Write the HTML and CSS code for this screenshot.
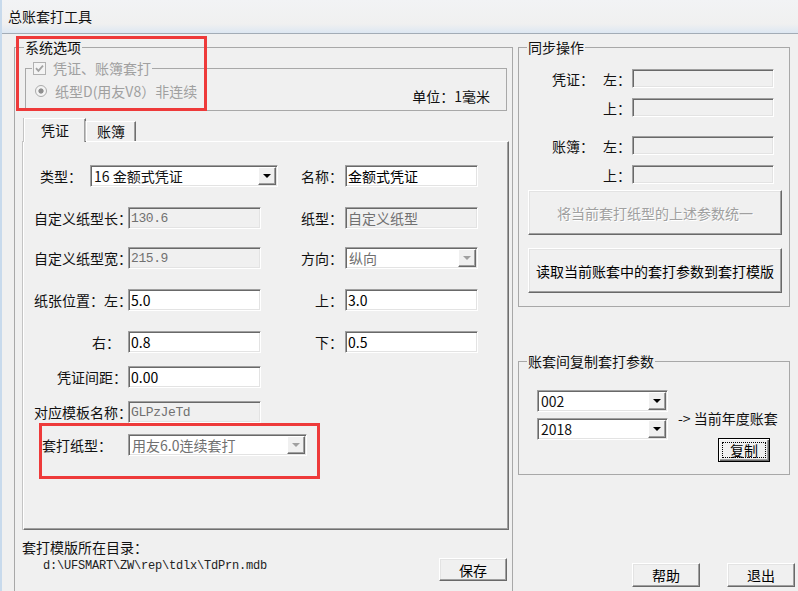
FILE: index.html
```html
<!DOCTYPE html>
<html lang="zh-CN">
<head>
    <meta charset="UTF-8">
    <title>总账套打工具</title>
    <link rel="stylesheet" href="styles.css">
</head>
<body>
    <div class="window">
        <div class="titlebar">总账套打工具</div>

        <div class="client">
            <fieldset class="group sys">
                <legend>系统选项</legend>

                <fieldset class="group opts">
                    <legend class="opts-legend">
                        <span class="check">
                            <svg width="13" height="13" viewBox="0 0 13 13"><rect x="0.5" y="0.5" width="12" height="12" fill="#f4f4f4" stroke="#b1b1b1"/><path d="M3 6.2 L5.4 8.8 L10 3.6" fill="none" stroke="#a2a2a2" stroke-width="1.8"/></svg>
                        </span>
                        <span class="muted">凭证、账簿套打</span>
                    </legend>
                    <div class="opts-body">
                        <div class="radio-line"><span class="radio"></span><span class="muted">纸型D(用友V8）非连续</span></div>
                        <div class="unit">单位：1毫米</div>
                    </div>
                </fieldset>

                <div class="tabs">
                    <div class="tab active">凭证</div>
                    <div class="tab">账簿</div>
                </div>
                <div class="tab-panel">
                    <div class="row">
                        <label class="lbl lbl-type">类型：</label>
                        <div class="combo combo-type"><span class="combo-text">16 金额式凭证</span><span class="combo-btn"><i class="arrow"></i></span></div>
                        <div class="half-r">
                            <label class="lbl-r">名称：</label>
                            <input class="field" value="金额式凭证">
                        </div>
                    </div>
                    <div class="row">
                        <label class="lbl">自定义纸型长：</label>
                        <input class="field mono" value="130.6" disabled>
                        <div class="half-r">
                            <label class="lbl-r">纸型：</label>
                            <input class="field" value="自定义纸型" disabled>
                        </div>
                    </div>
                    <div class="row gap-18">
                        <label class="lbl">自定义纸型宽：</label>
                        <input class="field mono" value="215.9" disabled>
                        <div class="half-r">
                            <label class="lbl-r">方向：</label>
                            <div class="combo combo-dir disabled"><span class="combo-text">纵向</span><span class="combo-btn"><i class="arrow"></i></span></div>
                        </div>
                    </div>
                    <div class="row">
                        <label class="lbl">纸张位置：左：</label>
                        <input class="field" value="5.0">
                        <div class="half-r">
                            <label class="lbl-r">上：</label>
                            <input class="field" value="3.0">
                        </div>
                    </div>
                    <div class="row">
                        <label class="lbl lbl-right">右：</label>
                        <input class="field" value="0.8">
                        <div class="half-r">
                            <label class="lbl-r">下：</label>
                            <input class="field" value="0.5">
                        </div>
                    </div>
                    <div class="row gap-13">
                        <label class="lbl lbl-gap">凭证间距：</label>
                        <input class="field" value="0.00">
                    </div>
                    <div class="row gap-13">
                        <label class="lbl">对应模板名称：</label>
                        <input class="field mono" value="GLPzJeTd" disabled>
                    </div>
                    <div class="row gap-11">
                        <label class="lbl lbl-paper">套打纸型：</label>
                        <div class="combo combo-paper disabled"><span class="combo-text">用友6.0连续套打</span><span class="combo-btn"><i class="arrow"></i></span></div>
                    </div>
                </div>

                <div class="dir">
                    <div class="dir-text">
                        <div>套打模版所在目录：</div>
                        <div class="dir-path path">d:\UFSMART\ZW\rep\tdlx\TdPrn.mdb</div>
                    </div>
                    <button class="btn btn-save">保存</button>
                </div>
            </fieldset>

            <div class="side">
                <fieldset class="group sync">
                    <legend>同步操作</legend>
                    <div class="sync-set">
                        <span class="set-name">凭证：</span><span>左：</span><input class="field sync-field" disabled>
                        <span></span><span>上：</span><input class="field sync-field" disabled>
                    </div>
                    <div class="sync-set sync-set-2">
                        <span class="set-name">账簿：</span><span>左：</span><input class="field sync-field" disabled>
                        <span></span><span>上：</span><input class="field sync-field" disabled>
                    </div>
                    <button class="btn wide-btn" disabled>将当前套打纸型的上述参数统一</button>
                    <button class="btn wide-btn wide-btn-2">读取当前账套中的套打参数到套打模版</button>
                </fieldset>

                <fieldset class="group copy">
                    <legend>账套间复制套打参数</legend>
                    <div class="copy-body">
                        <div class="copy-combos">
                            <div class="combo combo-copy"><span class="combo-text">002</span><span class="combo-btn"><i class="arrow"></i></span></div>
                            <div class="combo combo-copy"><span class="combo-text">2018</span><span class="combo-btn"><i class="arrow"></i></span></div>
                        </div>
                        <div class="copy-side">
                            <div class="copy-note">-&gt; 当前年度账套</div>
                            <button class="btn btn-default btn-copy">复制</button>
                        </div>
                    </div>
                </fieldset>

                <div class="foot">
                    <button class="btn btn-foot">帮助</button>
                    <button class="btn btn-foot">退出</button>
                </div>
            </div>
        </div>

        <div class="mark mark-sys"></div>
        <div class="mark mark-paper"></div>
    </div>
</body>
</html>
```

FILE: styles.css
```css
* {
    box-sizing: border-box;
}

body {
    margin: 0;
    background: #f0f0f0;
    font-family: "Noto Sans CJK SC", "Noto Sans", sans-serif;
    font-size: 14px;
    color: #111;
}

.window {
    position: relative;
    width: 798px;
    height: 591px;
    overflow: hidden;
    background: #f0f0f0;
    border-left: 2px solid #c8daec;
}

.titlebar {
    height: 34px;
    padding-left: 6px;
    line-height: 32px;
    background: linear-gradient(#f2f3f5 0, #f0f0f0 24px, #dde7f2 33px);
    border-bottom: 1px solid #a3acb6;
}

.client {
    display: flex;
    align-items: flex-start;
    padding-left: 12px;
}

/* group boxes */
.group {
    margin: 0;
    padding: 0;
    min-width: 0;
    border: 1px solid #a8a8a8;
}

.group > legend {
    padding: 0 1px;
    height: 16px;
    line-height: 16px;
    margin-left: 8px;
}

.sys {
    margin-top: 5px;
    width: 499px;
    height: 560px;
}

.sys > legend {
    margin-left: 9px;
}

.opts {
    margin: 5px 0 0 10px;
    width: 482px;
}

.opts > .opts-legend {
    display: flex;
    align-items: center;
    margin-left: 6px;
}

.check {
    display: flex;
    width: 13px;
    height: 13px;
    margin-right: 7px;
}

.muted {
    color: #a0a0a0;
}

.opts-body {
    height: 34px;
    display: flex;
    justify-content: space-between;
    align-items: flex-start;
    padding: 0 16px 0 9px;
}

.radio-line {
    display: flex;
    align-items: center;
    margin-top: 7px;
    line-height: 16px;
}

.radio {
    width: 12px;
    height: 12px;
    margin-right: 8px;
    border: 1px solid #ababab;
    border-radius: 50%;
    background: radial-gradient(circle, #8f8f8f 0, #8f8f8f 2.2px, #f4f4f4 3px);
}

.unit {
    margin-top: 12px;
    line-height: 16px;
}

/* tabs */
.tabs {
    display: flex;
    align-items: flex-end;
    height: 23px;
    margin: 7px 0 0 9px;
    position: relative;
    z-index: 1;
}

.tab {
    width: 50px;
    height: 20px;
    border: 1px solid;
    border-bottom: 0;
    border-color: #fff #6f6f6f transparent #fff;
    box-shadow: inset -1px 0 #a0a0a0, -1px 0 0 #c4c4c4;
    background: #f0f0f0;
    text-align: center;
    line-height: 19px;
}

.tab.active {
    width: 62px;
    height: 24px;
    margin-bottom: -1px;
    line-height: 22px;
}

.tab-panel {
    margin-left: 8px;
    width: 486px;
    height: 389px;
    padding-top: 23px;
    border: 1px solid;
    border-color: #fff #6f6f6f #6f6f6f #fff;
    box-shadow: inset -1px -1px #a0a0a0, -1px 0 0 #c4c4c4;
}

.row {
    display: flex;
    align-items: center;
    height: 22px;
    margin-top: 20px;
}

.row:first-child {
    margin-top: 0;
}

.row.gap-18 {
    margin-top: 18px;
}

.row.gap-13 {
    margin-top: 13px;
}

.row.gap-11 {
    margin-top: 11px;
}

.lbl {
    flex-shrink: 0;
    width: 104px;
    padding-left: 10px;
    white-space: nowrap;
}

.lbl-type {
    width: 66px;
    padding-left: 16px;
}

.lbl-right {
    padding-left: 68px;
}

.lbl-gap {
    padding-left: 33px;
}

.lbl-paper {
    padding-left: 18px;
}

.half-r {
    display: flex;
    align-items: center;
    margin-left: auto;
    margin-right: 30px;
}

.lbl-r {
    width: 57px;
    padding-right: 2px;
    text-align: right;
    white-space: nowrap;
}

/* edit boxes */
.field {
    flex-shrink: 0;
    width: 133px;
    height: 22px;
    margin: 0;
    padding: 0 0 0 2px;
    border: 1px solid;
    border-color: #a0a0a0 #fff #fff #a0a0a0;
    box-shadow: inset 1px 1px #696969, inset -1px -1px #e3e3e3;
    background: #fff;
    font-family: "Noto Sans CJK SC", sans-serif;
    font-size: 14px;
    color: #000;
    outline: none;
}

.field:disabled {
    background: #f0f0f0;
    color: #707070;
    -webkit-text-fill-color: #707070;
    opacity: 1;
}

.field.mono {
    font-family: "Liberation Mono", monospace;
    font-size: 13px;
    letter-spacing: -0.4px;
}

.path {
    font-family: "Liberation Mono", monospace;
    font-size: 12px;
    letter-spacing: -0.2px;
}

.combo {
    display: flex;
    flex-shrink: 0;
    height: 22px;
    padding: 1px;
    border: 1px solid;
    border-color: #a0a0a0 #fff #fff #a0a0a0;
    box-shadow: inset 1px 1px #696969, inset -1px -1px #e3e3e3;
    background: #fff;
}

.combo-text {
    flex: 1;
    padding-left: 2px;
    line-height: 18px;
    white-space: nowrap;
    overflow: hidden;
}

.combo-btn {
    display: flex;
    align-items: center;
    justify-content: center;
    width: 18px;
    background: #f0f0f0;
    border: 1px solid;
    border-color: #fff #696969 #696969 #fff;
    box-shadow: inset -1px -1px #a0a0a0;
}

.arrow {
    width: 0;
    height: 0;
    border-left: 4px solid transparent;
    border-right: 4px solid transparent;
    border-top: 4px solid #000;
}

.combo.disabled .combo-text {
    color: #707070;
}

.combo.disabled .arrow {
    border-top-color: #a0a0a0;
}

.combo-type {
    width: 188px;
}

.combo-dir {
    width: 133px;
}

.combo-paper {
    width: 179px;
}

.combo-copy {
    width: 131px;
}

/* directory line */
.dir {
    display: flex;
    justify-content: space-between;
    align-items: flex-start;
    margin-top: 9px;
    padding: 0 5px 0 7px;
    line-height: 16px;
}

.dir-path {
    margin-top: 3px;
    padding-left: 21px;
    color: #222;
}

/* buttons */
.btn {
    margin: 0;
    padding: 0;
    background: #f0f0f0;
    border: 1px solid;
    border-color: #fff #696969 #696969 #fff;
    box-shadow: inset -1px -1px #a0a0a0, inset 1px 1px #e3e3e3;
    font-family: "Noto Sans CJK SC", sans-serif;
    font-size: 14px;
    color: #000;
}

.btn:disabled {
    color: #a0a0a0;
    text-shadow: 1px 1px 0 #fff;
}

.btn-default {
    border: 1px solid #000;
    box-shadow: inset 1px 1px #fff, inset -1px -1px #696969, inset -2px -2px #a0a0a0;
    outline: 1px dotted #000;
    outline-offset: -5px;
}

.btn-save {
    width: 68px;
    height: 23px;
    margin-top: 19px;
}

/* right column */
.side {
    width: 280px;
    margin-left: 5px;
}

.sync {
    margin-top: 5px;
    width: 272px;
    padding-bottom: 13px;
}

.sync-set {
    display: grid;
    grid-template-columns: 84px 29px 142px;
    grid-auto-rows: 19px;
    row-gap: 10px;
    align-items: center;
    margin-top: 14px;
    line-height: 16px;
}

.sync-set-2 {
    margin-top: 19px;
}

.set-name {
    padding-left: 33px;
}

.sync-field {
    width: 142px;
    height: 19px;
}

.wide-btn {
    display: block;
    width: 254px;
    height: 45px;
    margin: 6px 0 0 9px;
}

.wide-btn-2 {
    margin-top: 13px;
}

.copy {
    margin-top: 46px;
    width: 272px;
    padding-bottom: 12px;
}

.copy-body {
    display: flex;
    margin-top: 21px;
    padding-left: 18px;
}

.copy-combos {
    display: flex;
    flex-direction: column;
    gap: 6px;
}

.copy-side {
    margin: 20px 0 0 10px;
}

.copy-note {
    line-height: 16px;
    white-space: nowrap;
}

.btn-copy {
    width: 52px;
    height: 24px;
    margin: 12px 0 0 40px;
}

.foot {
    display: flex;
    justify-content: flex-end;
    gap: 27px;
    margin-top: 88px;
    padding-right: 3px;
}

.btn-foot {
    width: 68px;
    height: 24px;
}

/* red annotation boxes drawn over the dialog */
.mark {
    position: absolute;
    border: 3px solid #ee3a3a;
    pointer-events: none;
}

.mark-sys {
    left: 14px;
    top: 36px;
    width: 191px;
    height: 75px;
}

.mark-paper {
    left: 37px;
    top: 423px;
    width: 281px;
    height: 56px;
}
```
